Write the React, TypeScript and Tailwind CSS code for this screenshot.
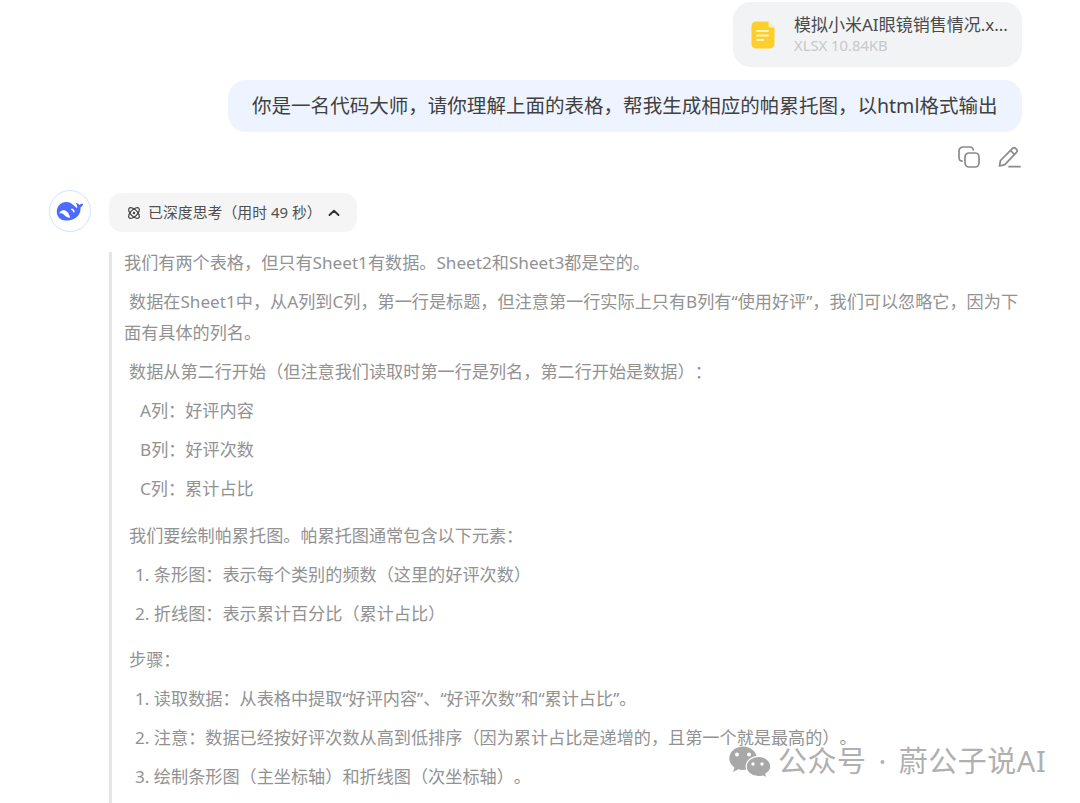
const FONT = "font-['Noto_Sans','Noto_Sans_CJK_SC',sans-serif] [text-spacing-trim:space-all]";

function FileIcon() {
  return (
    <svg width="24" height="28" viewBox="0 0 24 28">
      <path d="M5 .5h12.500L23.500 6.500V23a4.500 4.500 0 0 1-4.500 4.500H5A4.500 4.500 0 0 1 .5 23V5A4.500 4.500 0 0 1 5 .5z" fill="#fdcf2a" />
      <path d="M17.500.5l6 6h-4a2 2 0 0 1-2-2z" fill="#fff0b8" />
      <path d="M6 10h11M6 14.500h11M6 19h6.500" stroke="#fff3c4" strokeWidth="1.800" strokeLinecap="round" />
    </svg>
  );
}

function CopyIcon() {
  return (
    <svg width="22" height="22" viewBox="0 0 22 22" fill="none" stroke="#8a8a8a" strokeWidth="1.700">
      <rect x="7" y="7" width="14" height="14" rx="4" />
      <path d="M4 15.200A3.500 3.500 0 0 1 1 12V5a4 4 0 0 1 4-4h7a3.500 3.500 0 0 1 3.300 3" strokeLinecap="round" />
    </svg>
  );
}

function EditIcon() {
  return (
    <svg width="23" height="22" viewBox="0 0 23 22" fill="none" stroke="#8a8a8a" strokeWidth="1.700" strokeLinejoin="round">
      <path d="M1.500 20l1-5.500L14.500 2.400a2.200 2.200 0 0 1 3.100 0l.9.9a2.200 2.200 0 0 1 0 3.100L6.800 18.600z" />
      <path d="M12.500 4.500l4 4" />
      <path d="M11 20.700h11" strokeLinecap="round" />
    </svg>
  );
}

function Whale() {
  return (
    <svg width="28" height="21" viewBox="0 0 28 21">
      <path
        d="M.8 10C1 5 5 1 10 1c4 0 6.500 2 9 4.500.8.800 1.500 1.400 2.200 1.500.3-1.800-.4-3.500-1.600-5.500 1.700.4 3 1.300 3.800 2.500.9-.9 2.200-1.400 3.800-1.300-.4 1.700-1.300 3-2.600 3.800.2 4-1.200 7.500-4.400 10-2.800 2.200-6.500 3.200-10 2.900C4.500 19.800.5 15.500.8 10z"
        fill="#4d6bfe"
      />
      <path d="M3 12.500C4.200 9.800 6.400 8.700 8.600 9.300c2.800.8 4.400 3.500 5.700 7.400-2.800.2-4.800-1-6.200-2.900-1.500-1.800-3.200-2-5.100-1.300z" fill="#fff" />
      <path d="M15.800 8.300c1.200.5 1.800 1.200 2.200 2.400" stroke="#fff" strokeWidth="1.500" strokeLinecap="round" fill="none" />
    </svg>
  );
}

function Atom() {
  return (
    <svg width="14" height="14" viewBox="0 0 14 14" fill="none" stroke="#404040" strokeWidth="1.200">
      <ellipse cx="7" cy="7" rx="3.300" ry="6.800" transform="rotate(45 7 7)" />
      <ellipse cx="7" cy="7" rx="3.300" ry="6.800" transform="rotate(-45 7 7)" />
      <circle cx="7" cy="7" r="1.200" fill="#404040" stroke="none" />
    </svg>
  );
}

function Chevron() {
  return (
    <svg width="12" height="8" viewBox="0 0 12 8" fill="none" stroke="#303030" strokeWidth="1.900" strokeLinecap="round" strokeLinejoin="round">
      <path d="M1.500 6L6 1.800 10.500 6" />
    </svg>
  );
}

function WeChat() {
  return (
    <svg width="42" height="32" viewBox="0 0 42 32">
      <path d="M14 .5C6.500.5.300 5.700.3 12.300c0 3.700 2 6.900 5.200 9.100L4 26l5.300-2.700c1.500.4 3 .7 4.700.7 7.600 0 13.800-5.200 13.800-11.700S21.600.5 14 .5z" fill="#a8a8a8" />
      <path d="M41.800 20.500c0-5.600-5.500-10.200-12.300-10.200S17.200 14.900 17.200 20.500s5.500 10.200 12.300 10.200c1.500 0 2.900-.2 4.200-.6l4.300 1.800-1.200-3.800c3-1.900 5-4.200 5-7.600z" fill="#a8a8a8" stroke="#fff" strokeWidth="1.200" />
      <circle cx="8" cy="8.500" r="2" fill="#fff" />
      <circle cx="20" cy="8.500" r="2" fill="#fff" />
      <circle cx="24" cy="18" r="1.700" fill="#fff" />
      <circle cx="33" cy="18" r="1.700" fill="#fff" />
    </svg>
  );
}

function Line({ children, className = "" }: { children: React.ReactNode; className?: string }) {
  return <p className={`h-[31px] leading-[31px] whitespace-nowrap ${className}`}>{children}</p>;
}

export default function App() {
  return (
    <div className={`relative h-[803px] w-[1080px] overflow-hidden bg-white ${FONT}`}>
      <div className="flex flex-col pl-[49px] pr-[58px] pt-[2px]">
        <div className="flex flex-col items-end">
          <div className="flex h-[65px] w-[289px] items-center rounded-[18px] bg-[#f2f3f5] pl-[18px]">
            <FileIcon />
            <div className="ml-[19px] flex flex-col pb-[4px]">
              <span className="text-[17px] leading-[24px] text-[#4a4a4a] whitespace-nowrap">模拟小米AI眼镜销售情况.x...</span>
              <span className="text-[14.800px] leading-[16px] text-[#c8c8c8]">XLSX 10.84KB</span>
            </div>
          </div>
          <div className="mt-[13px] flex h-[52px] w-[794px] items-center rounded-[18px] bg-[#eef4ff] pl-[24px] pt-[0px] text-[19.550px] text-[#404040] whitespace-nowrap">
            你是一名代码大师，请你理解上面的表格，帮我生成相应的帕累托图，以html格式输出
          </div>
          <div className="mt-[14px] mr-[1px] flex h-[22px] items-center gap-[18px]">
            <CopyIcon />
            <EditIcon />
          </div>
        </div>

        <div className="mt-[22px] flex items-start">
          <div className="flex h-[42px] w-[42px] items-center justify-center rounded-full border border-[#d5e1ff]">
            <Whale />
          </div>
          <div className="ml-[18px] flex-1">
            <div className="mt-[3px] flex h-[39px] w-[248px] items-center rounded-[13px] bg-[#f5f5f5] pl-[18px] text-[14.900px] text-[#505050] whitespace-nowrap">
              <Atom />
              <span className="ml-[7px]">已深度思考（用时 49 秒）</span>
              <span className="ml-[6px] flex"><Chevron /></span>
            </div>
            <div className="mt-[20px] flex flex-col gap-[8px] border-l-[3px] border-[#e5e5e5] pl-[12px] text-[17.150px] text-[#929292]">
              <Line className="mt-[-5px]">我们有两个表格，但只有Sheet1有数据。Sheet2和Sheet3都是空的。</Line>
              <div className="pl-[5px]">
                <Line>数据在Sheet1中，从A列到C列，第一行是标题，但注意第一行实际上只有B列有“使用好评”，我们可以忽略它，因为下</Line>
                <Line className="ml-[-5px]">面有具体的列名。</Line>
              </div>
              <Line className="pl-[5px]">数据从第二行开始（但注意我们读取时第一行是列名，第二行开始是数据）：</Line>
              <Line className="pl-[16px]">A列：好评内容</Line>
              <Line className="pl-[16px]">B列：好评次数</Line>
              <Line className="pl-[16px]">C列：累计占比</Line>
              <Line className="mt-[8px] pl-[5px]">我们要绘制帕累托图。帕累托图通常包含以下元素：</Line>
              <Line className="pl-[11px]">1. 条形图：表示每个类别的频数（这里的好评次数）</Line>
              <Line className="pl-[11px]">2. 折线图：表示累计百分比（累计占比）</Line>
              <Line className="mt-[7px] pl-[5px]">步骤：</Line>
              <Line className="pl-[11px]">1. 读取数据：从表格中提取“好评内容”、“好评次数”和“累计占比”。</Line>
              <Line className="pl-[11px]">2. 注意：数据已经按好评次数从高到低排序（因为累计占比是递增的，且第一个就是最高的）。</Line>
              <Line className="pl-[11px]">3. 绘制条形图（主坐标轴）和折线图（次坐标轴）。</Line>
              <Line>&nbsp;</Line>
            </div>
          </div>
        </div>
      </div>

      <div className="absolute left-[729px] top-[744px] flex items-center">
        <WeChat />
        <span className="mb-[2px] ml-[7px] text-[29px] leading-[34px] tracking-[0.5px] [word-spacing:4px] text-[#b0b0b0] whitespace-nowrap">公众号 · 蔚公子说AI</span>
      </div>
    </div>
  );
}
